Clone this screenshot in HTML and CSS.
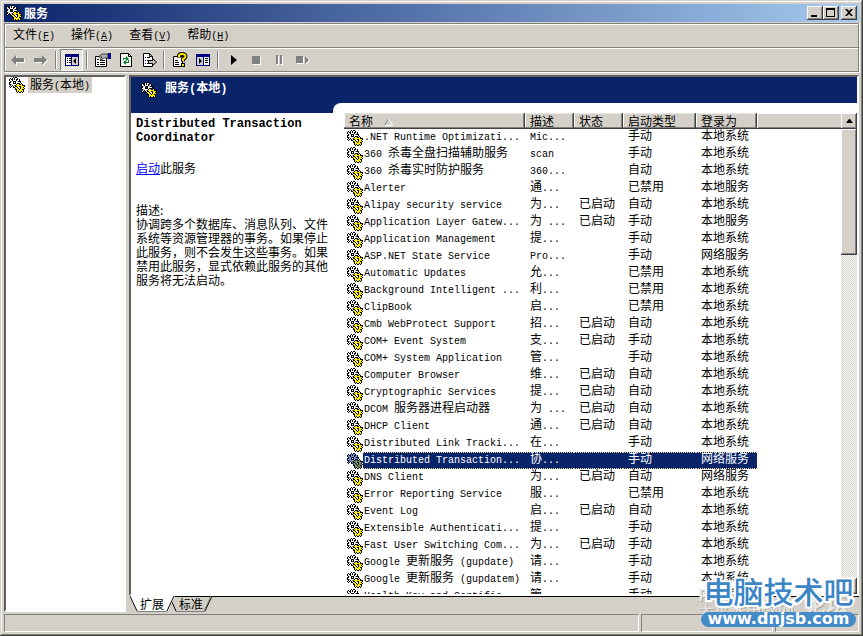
FILE: index.html
```html
<!DOCTYPE html>
<html lang="zh-CN">
<head>
<meta charset="utf-8">
<title>服务</title>
<link rel="stylesheet" href="styles.css">
</head>
<body>
<svg class="defs" aria-hidden="true">
  <symbol id="gears" viewBox="0 0 16 16">
    <g fill="none" stroke-width="1" shape-rendering="crispEdges">
      <path class="g-black" d="M4 .5h1M6 .5h2M1 1.500h1M3 1.500h6M0 2.500h11M0 3.500h11M1 4.500h11M0 5.500h5M6 5.500h6M0 6.500h11M12 6.500h1M0 7.500h14M1 8.500h15M0 9.500h3M4 9.500h12M1 10.500h1M4 10.500h11M6 11.500h10M6 12.500h9M7 13.500h8M7 14.500h8M8 15.500h1M10 15.500h2M13 15.500h1"/>
      <path class="g-white" d="M4 1.500h1M6 1.500h2M1 2.500h1M4 2.500h1M6 2.500h1M9 2.500h1M1 3.500h2M4 3.500h3M8 3.500h2M3 4.500h1M7 4.500h1M2 5.500h2M7 5.500h4M1 6.500h3M7 6.500h1M3 7.500h4M2 8.500h1M4 8.500h1M1 9.500h1M5 9.500h1M9 10.500h2M10 11.500h1"/>
      <path class="g-gray" d="M2 4.500h1M8 4.500h1M2 7.500h1M5 8.500h1"/>
      <path class="g-yellow" d="M8 7.500h2M12 7.500h1M7 8.500h6M8 9.500h2M12 9.500h3M6 10.500h2M12 10.500h2M7 11.500h2M12 11.500h3M8 12.500h2M11 12.500h2M8 13.500h6M8 14.500h1M10 14.500h2M13 14.500h1"/>
    </g>
  </symbol>
</svg>
<div class="window">
  <header class="titlebar">
    <svg class="gear"><use href="#gears"/></svg>
    <h1>服务</h1>
    <div class="caption-buttons">
      <button aria-label="最小化"><svg viewBox="0 0 12 10"><path d="M2 7h6v2H2z"/></svg></button>
      <button aria-label="最大化"><svg viewBox="0 0 12 10"><path d="M1 0h9v9H1zM2 2v6h7V2z" fill-rule="evenodd"/></svg></button>
      <button class="close" aria-label="关闭"><svg viewBox="0 0 12 10"><path d="M2 1h2l2 2 2-2h2L7 4.500l3 3.500H8L6 6 4 8H2l3-3.500z"/></svg></button>
    </div>
  </header>
  <nav class="menubar">
    <button><span class="zh">文件</span>(<u>F</u>)</button>
    <button><span class="zh">操作</span>(<u>A</u>)</button>
    <button><span class="zh">查看</span>(<u>V</u>)</button>
    <button><span class="zh">帮助</span>(<u>H</u>)</button>
  </nav>
  <div class="toolbar">
    <button aria-label="后退"><svg viewBox="0 0 16 16"><path d="M7 4v3h8v4H7v3L2 9z" fill="#fff"/><path d="M6 3v3h8v4H6v3L1 8z" fill="#808080"/></svg></button>
    <button aria-label="前进"><svg viewBox="0 0 16 16"><path d="M10 4v3H2v4h8v3l5-5z" fill="#fff"/><path d="M9 3v3H1v4h8v3l5-5z" fill="#808080"/></svg></button>
    <span class="sep"></span>
    <button class="pressed" aria-label="显示控制台树"><svg viewBox="0 0 16 16"><path d="M1 2h14v12H1z" fill="#000080"/><path d="M2 5h5v8H2z" fill="#fff"/><path d="M8 5h6v8H8z" fill="#d4d0c8"/><path d="M3 6h1v1H3zM5 6h2v1H5zM3 8h1v1H3zM5 8h2v1H5zM3 10h1v1H3zM5 10h2v1H5zM12 6v6L9 9z"/></svg></button>
    <span class="sep"></span>
    <button aria-label="属性"><svg viewBox="0 0 16 16"><path d="M.5 4.500h11v10H.5z" fill="#fff" stroke="#000"/><path d="M2 7h2v1H2zM5 8h5v1H5zM2 10h2v1H2zM5 10h5v1H5zM2 12h2v1H2zM5 12h5v1H5z"/><path d="M3 5l4-3h6v4H9L6 8 5 7l2-2z" fill="#b0b0b0" stroke="#000" stroke-width=".7"/><path d="M13 1h3v6h-3z" fill="#000080"/></svg></button>
    <button aria-label="刷新"><svg viewBox="0 0 16 16"><path d="M2.500 1.500h8l3 3v10h-11z" fill="#fff" stroke="#000"/><path d="M10.500 1.500v3h3" fill="none" stroke="#000"/><path d="M5 8V6h3V4l3 3-3 2V7H6v1zM11 8v3H8v2l-3-3 3-2v2h2V8z" fill="#008020"/></svg></button>
    <button aria-label="导出列表"><svg viewBox="0 0 16 16"><path d="M2.500 1.500h6l3 3v10h-9z" fill="#fff" stroke="#000"/><path d="M8.500 1.500v3h3" fill="none" stroke="#000"/><path d="M4 5h1v1H4zM4 8h1v1H4zM4 11h1v1H4z" fill="#00f"/><path d="M6 5h3v1H6zM6 8h2v1H6zM6 11h2v1H6z"/><path d="M7.500 8.500h4v-2l4 3.500-4 3.500v-2h-4z" fill="#c0c0c0" stroke="#000"/></svg></button>
    <span class="sep"></span>
    <button aria-label="帮助"><svg viewBox="0 0 16 16"><path d="M1.500 4.500h9v10h-9z" fill="#fff" stroke="#000"/><path d="M3 8h3v1H3zM3 10h4v1H3zM3 12h4v1H3z"/><path d="M7 5.500V4q0-2 3-2t3.500 2q0 2-2.500 3v2.500" fill="none" stroke="#000" stroke-width="4"/><path d="M7 5V4q0-2 3-2t3.500 2q0 2-2.500 3v2" fill="none" stroke="#ffe600" stroke-width="2"/><path d="M9 11h4v4H9z"/><path d="M10 12h2v2h-2z" fill="#ffe600"/></svg></button>
    <button aria-label="扩展视图"><svg viewBox="0 0 16 16"><path d="M1 2h14v12H1z" fill="#000080"/><path d="M2 5h6v8H2z" fill="#d4d0c8"/><path d="M9 5h5v8H9z" fill="#fff"/><path d="M4 6v6l3-3zM10 6h3v1h-3zM10 8h3v1h-3zM10 10h3v1h-3z"/></svg></button>
    <span class="sep"></span>
    <button aria-label="启动服务"><svg viewBox="0 0 16 16"><path d="M5 3l6 5-6 5z"/></svg></button>
    <button aria-label="停止服务"><svg viewBox="0 0 16 16"><path d="M4 5h8v8H4z" fill="#fff"/><path d="M3 4h8v8H3z" fill="#808080"/></svg></button>
    <button aria-label="暂停服务"><svg viewBox="0 0 16 16"><path d="M5 4h2v9H5zM9 4h2v9H9z" fill="#fff"/><path d="M4 3h2v9H4zM8 3h2v9H8z" fill="#808080"/></svg></button>
    <button aria-label="重新启动服务"><svg viewBox="0 0 16 16"><path d="M2 5h7v7H2zM11 4l4 4.500-4 4z" fill="#fff"/><path d="M1 4h7v7H1zM10 4l4 4-4 4z" fill="#808080"/></svg></button>
  </div>
  <main class="panes">
    <aside class="tree">
      <svg class="gear"><use href="#gears"/></svg>
      <span class="tree-label"><span class="zh">服务</span>(<span class="zh">本地</span>)</span>
    </aside>
    <div class="right">
      <section class="view">
        <div class="view-title">
          <svg class="gear"><use href="#gears"/></svg>
          <h2><span class="zh">服务</span>(<span class="zh">本地</span>)</h2>
        </div>
        <div class="view-body">
          <div class="details">
            <h3>Distributed Transaction Coordinator</h3>
            <p class="action"><a href="#start">启动</a>此服务</p>
            <p>描述:<br>协调跨多个数据库、消息队列、文件系统等资源管理器的事务。如果停止此服务，则不会发生这些事务。如果禁用此服务，显式依赖此服务的其他服务将无法启动。</p>
          </div>
          <div class="list">
            <div class="table-wrap">
              <table>
                <colgroup><col class="c-name"><col class="c-desc"><col class="c-state"><col class="c-type"><col class="c-logon"><col></colgroup>
                <thead>
                  <tr><th>名称<svg class="sort" viewBox="0 0 9 8"><path d="M.5 7.500l4-7" stroke="#808080" fill="none"/><path d="M4.500.5l4 7h-8" stroke="#fff" fill="none"/></svg></th><th>描述</th><th>状态</th><th>启动类型</th><th>登录为</th><th></th></tr>
                </thead>
                <tbody id="services"></tbody>
              </table>
            </div>
            <div class="scrollbar">
              <button aria-label="向上滚动"><svg viewBox="0 0 7 4"><path d="M3 0h1l3 4H0z"/></svg></button>
              <div class="track"><div class="thumb"></div></div>
              <button aria-label="向下滚动"><svg viewBox="0 0 7 4"><path d="M0 0h7L4 4H3z"/></svg></button>
            </div>
          </div>
        </div>
      </section>
      <div class="tabs">
        <button class="tab active"><svg viewBox="0 0 46 16"><path d="M0 0h46l-7 15H8z" fill="#fff"/><path d="M1 0l7 15M38 15l7-15" fill="none" stroke="#000"/><path d="M8 15.500h30" stroke="#808080"/></svg><span>扩展</span></button>
        <button class="tab"><svg viewBox="0 0 46 16"><path d="M4 6l4 9M37 15l7-15" fill="none" stroke="#000"/><path d="M8 15.500h29M36 15l7-15" fill="none" stroke="#808080"/></svg><span>标准</span></button>
      </div>
    </div>
  </main>
  <footer class="status"><span></span><span></span><span></span></footer>
  <div class="watermark">
    <div class="ghost"><div><b>PConline</b><span>太平洋电脑网</span></div><strong>论坛</strong></div>
    <div class="brand">电脑技术吧</div>
    <div class="url">www.dnjsb.com</div>
  </div>
</div>
<script src="services.js"></script>
</body>
</html>
```
FILE: styles.css
```css
* { box-sizing: border-box; }
body {
  margin: 0;
  font: 10px/14px "Liberation Mono", "Noto Sans CJK SC", monospace;
  color: #000;
}
h1, h2, h3, p { margin: 0; }
button { font: inherit; color: inherit; padding: 0; border: 0; background: none; }
.zh, h1, th, .details, .tab { font-family: "Noto Sans CJK SC", sans-serif; font-size: 12px; }
.defs { position: absolute; width: 0; height: 0; }

.gear {
  --gear-black: #000;
  --gear-white: #fff;
  --gear-gray: #a0a0a0;
  --gear-yellow: #ffee00;
  flex: none;
  display: block;
  width: 16px;
  height: 16px;
}
.g-black { stroke: var(--gear-black); }
.g-white { stroke: var(--gear-white); }
.g-gray { stroke: var(--gear-gray); }
.g-yellow { stroke: var(--gear-yellow); }

.window {
  position: relative;
  display: flex;
  flex-direction: column;
  height: 100vh;
  padding: 4px;
  overflow: hidden;
  background: #d4d0c8;
  box-shadow: inset -1px -1px #404040, inset 1px 1px #d4d0c8, inset -2px -2px #808080, inset 2px 2px #fff;
}
.titlebar {
  flex: none;
  display: flex;
  align-items: center;
  gap: 2px;
  height: 18px;
  padding: 0 2px;
  margin-bottom: 1px;
  background: linear-gradient(90deg, #0a246a, #a6caf0);
}
h1 { flex: 1; color: #fff; line-height: 14px; }
.caption-buttons { display: flex; }
.caption-buttons button, .scrollbar button, .thumb {
  background: #d4d0c8;
  box-shadow: inset -1px -1px #404040, inset 1px 1px #fff, inset -2px -2px #808080;
}
.caption-buttons button { display: flex; align-items: center; justify-content: center; width: 16px; height: 14px; }
.caption-buttons svg { width: 12px; height: 10px; }
.caption-buttons .close { margin-left: 2px; }

.menubar, .toolbar {
  flex: none;
  display: flex;
  align-items: center;
  border: 1px solid #808080;
  box-shadow: inset 1px 1px #fff, 1px 0 #fff;
}
.menubar { gap: 16px; height: 24px; padding: 0 8px; border-bottom: 0; }
.menubar button { display: block; white-space: nowrap; }
.toolbar { height: 25px; padding: 0 1px; margin-bottom: 3px; box-shadow: inset 1px 1px #fff, 1px 1px #fff; }
.toolbar button { display: flex; align-items: center; justify-content: center; width: 23px; height: 22px; }
.toolbar svg { width: 16px; height: 16px; }
.toolbar .pressed {
  border: 1px solid;
  border-color: #808080 #fff #fff #808080;
  background: repeating-conic-gradient(#fff 0 25%, #d4d0c8 0 50%) 0 0 / 2px 2px;
}
.sep { width: 8px; height: 18px; background: linear-gradient(90deg, transparent 3px, #808080 3px 4px, #fff 4px 5px, transparent 5px); }

.panes { flex: 1; display: flex; gap: 3px; min-height: 0; margin-bottom: 2px; }
.tree, .view {
  border: 2px solid;
  border-color: #606060 #fff #fff #606060;
  background: #fff;
}
.tree { flex: 0 0 122px; display: flex; gap: 3px; padding-left: 3px; }
.tree-label { height: 16px; padding: 0 2px; background: #d4d0c8; }
.right { flex: 1; display: flex; flex-direction: column; min-width: 0; }
.view { flex: 1; display: flex; flex-direction: column; min-height: 0; background: #0a246a; }
.view-title { flex: none; display: flex; align-items: center; gap: 8px; height: 26px; padding-left: 10px; color: #fff; }
h2 { font-size: 12px; line-height: 14px; padding-bottom: 4px; }
.view-body { flex: 1; display: flex; min-height: 0; }
.details { flex: 0 0 202px; margin-top: 10px; padding: 4px 0 0 5px; background: #fff; }
h3 { font-family: "Liberation Mono", monospace; font-size: 12px; line-height: 14px; }
.details p { width: 194px; line-height: 14px; }
.details .action { margin: 16px 0 28px; }
.details a { color: #00f; }

.list { flex: 1; display: flex; min-width: 0; padding: 10px 0 0 11px; border-top-left-radius: 8px; background: #fff; }
.table-wrap { flex: 1; min-width: 0; overflow: hidden; }
table { width: 100%; table-layout: fixed; border-collapse: separate; border-spacing: 0; }
.c-name { width: 181px; }
.c-desc, .c-state { width: 49px; }
.c-type { width: 73px; }
.c-logon { width: 61px; }
th, td { padding: 0 0 0 5px; text-align: left; font-weight: normal; white-space: nowrap; }
th { height: 16px; line-height: 14px; background: #d4d0c8; box-shadow: inset -1px -1px #404040, inset 0 1px #e8e6e0, inset -2px -2px #808080, inset 1px 0 #fff; }
th:last-child { box-shadow: inset 0 -1px #404040, inset 1px 1px #fff, inset 0 -2px #808080; }
.sort { width: 9px; height: 8px; margin-left: 11px; }
td { height: 17px; line-height: 17px; }
td .zh { line-height: 12px; }
td:first-child { padding-left: 3px; }
.name { display: flex; align-items: center; height: 17px; }
.name .label { flex: 1; height: 17px; padding-left: 1px; }
.selected { color: #fff; }
.selected .label, .selected td:not(:first-child):not(:last-child) {
  background:
    repeating-linear-gradient(90deg, #f5db95 0 1px, #0a246a 1px 2px) 0 0 / 100% 1px no-repeat,
    repeating-linear-gradient(90deg, #f5db95 0 1px, #0a246a 1px 2px) 0 100% / 100% 1px no-repeat,
    #0a246a;
}
.selected .gear {
  --gear-black: #0a1a48;
  --gear-white: #8492b4;
  --gear-gray: #50608c;
  --gear-yellow: #7c8640;
}

.scrollbar { flex: 0 0 16px; display: flex; flex-direction: column; }
.scrollbar button { flex: none; display: flex; align-items: center; justify-content: center; height: 16px; }
.scrollbar svg { width: 7px; height: 4px; }
.track { flex: 1; background: repeating-conic-gradient(#fff 0 25%, #d4d0c8 0 50%) 0 0 / 2px 2px; }
.thumb { height: 28%; }

.tabs { flex: none; display: flex; height: 16px; background: linear-gradient(#000, #000) 44px 0 / 100% 1px no-repeat; }
.tab { position: relative; width: 46px; height: 16px; line-height: 14px; }
.tab + .tab { margin-left: -7px; }
.tab svg { position: absolute; inset: 0; width: 46px; height: 16px; }
.tab span { position: relative; }
.tab.active { z-index: 1; }

.status { flex: none; display: flex; gap: 2px; height: 18px; }
.status span { flex: 0 0 132px; border: 1px solid; border-color: #808080 #fff #fff #808080; }
.status span:first-child { flex: 1; }
.status span:last-child { flex-basis: 84px; }

.watermark { position: absolute; right: 7px; bottom: 9px; width: 155px; font-family: "Noto Sans CJK SC", sans-serif; }
.brand {
  position: relative;
  font-size: 30px;
  line-height: 34px;
  font-weight: 500;
  text-align: center;
  white-space: nowrap;
  color: #3c86c6;
  -webkit-text-stroke: 4px #fff;
  paint-order: stroke fill;
}
.url {
  position: relative;
  height: 15px;
  margin-top: 5px;
  border-radius: 8px;
  background: #438bc9;
  color: #fff;
  font: bold 16px/13px "DejaVu Sans", sans-serif;
  text-align: center;
}
.ghost {
  position: absolute;
  left: -3px;
  top: 13px;
  display: flex;
  gap: 10px;
  color: #e8e6e2;
  text-shadow: 1px 1px #aaa6a0;
  white-space: nowrap;
}
.ghost b, .ghost span { display: block; font-size: 16px; line-height: 16px; }
.ghost strong { font-size: 22px; line-height: 32px; }
```
FILE: services.js
```js
// name | description | state | startup type | log on as
const services = `
.NET Runtime Optimizati...|Mic...||手动|本地系统
360 杀毒全盘扫描辅助服务|scan||手动|本地系统
360 杀毒实时防护服务|360...||自动|本地系统
Alerter|通...||已禁用|本地服务
Alipay security service|为...|已启动|自动|本地系统
Application Layer Gatew...|为 ...|已启动|手动|本地服务
Application Management|提...||手动|本地系统
ASP.NET State Service|Pro...||手动|网络服务
Automatic Updates|允...||已禁用|本地系统
Background Intelligent ...|利...||已禁用|本地系统
ClipBook|启...||已禁用|本地系统
Cmb WebProtect Support|招...|已启动|自动|本地系统
COM+ Event System|支...|已启动|手动|本地系统
COM+ System Application|管...||手动|本地系统
Computer Browser|维...|已启动|自动|本地系统
Cryptographic Services|提...|已启动|自动|本地系统
DCOM 服务器进程启动器|为 ...|已启动|自动|本地系统
DHCP Client|通...|已启动|自动|本地系统
Distributed Link Tracki...|在...||手动|本地系统
Distributed Transaction...|协...||手动|网络服务
DNS Client|为...|已启动|自动|网络服务
Error Reporting Service|服...||已禁用|本地系统
Event Log|启...|已启动|自动|本地系统
Extensible Authenticati...|提...||手动|本地系统
Fast User Switching Com...|为...|已启动|手动|本地系统
Google 更新服务 (gupdate)|请...||手动|本地系统
Google 更新服务 (gupdatem)|请...||手动|本地系统
Health Key and Certific...|管...||手动|本地系统`.trim().split("\n").map(line => line.split("|"));

const selected = "Distributed Transaction...";

// Chinese runs are set in the larger size, Latin stays in the half-width face.
const mark = text => text.replace(/[\u4e00-\u9fff]+/g, run => `<span class="zh">${run}</span>`);

document.getElementById("services").innerHTML = services.map(([name, ...rest]) => `
  <tr${name === selected ? ' class="selected"' : ""}>
    <td><div class="name"><svg class="gear"><use href="#gears"/></svg><span class="label">${mark(name)}</span></div></td>
    ${rest.map(cell => `<td>${mark(cell)}</td>`).join("")}<td></td>
  </tr>`).join("");
```
